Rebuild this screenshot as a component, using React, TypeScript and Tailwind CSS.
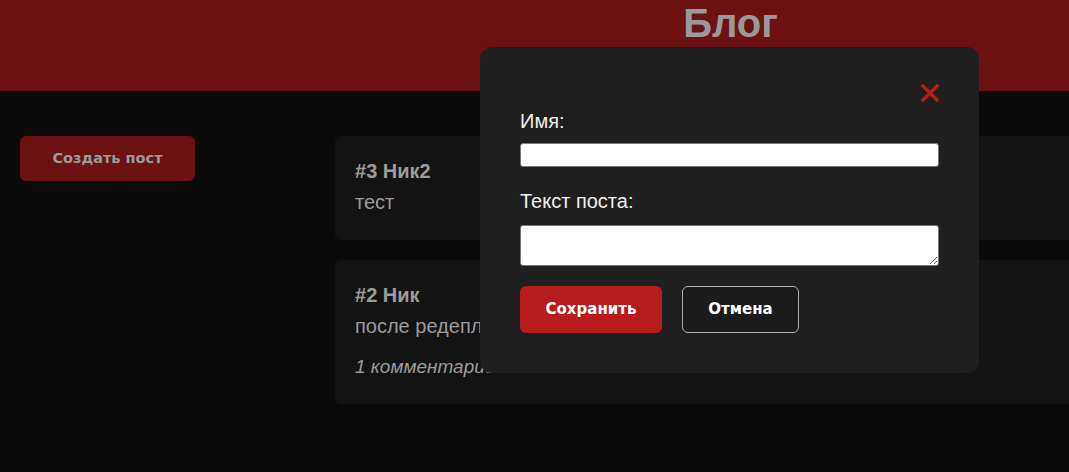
import { useState } from 'react'

const posts = [
    { id: 3, author: 'Ник2', text: 'тест', comments: 0 },
    { id: 2, author: 'Ник', text: 'после редеплоя', comments: 1 }
]

function CloseIcon() {
    return (
        <svg width="20" height="18" viewBox="0 0 20 18" className="block">
            <path d="M4 2 L18 16 M18 2 L4 16" stroke="#b71c1c" strokeWidth="3.4" strokeLinecap="square" />
        </svg>
    )
}

function PostCard({ post }: { post: (typeof posts)[number] }) {
    return (
        <div className="rounded-md bg-[#131313] px-5 pt-[24px] pb-[26px] text-[#9c9c9c]">
            <div className="text-[20px] leading-[23px] font-bold">
                #{post.id} {post.author}
            </div>
            <div className="mt-[8px] text-[20px] leading-[23px]">{post.text}</div>
            {post.comments > 0 && (
                <div className="mt-[17px] text-[19px] leading-[23px] italic">
                    {post.comments} комментарий
                </div>
            )}
        </div>
    )
}

function PostModal({ onClose }: { onClose: () => void }) {
    return (
        <div className="absolute left-[480px] top-[47px] w-[499px] rounded-xl bg-[#1f1f1f] px-10 pt-[37px] pb-10">
            <div className="flex justify-end">
                <button onClick={onClose} className="cursor-pointer">
                    <CloseIcon />
                </button>
            </div>
            <label className="mt-[8px] block text-[20px] leading-[23px] text-[#f0f0f0]">Имя:</label>
            <input className="mt-[10px] block h-[24px] w-full rounded-[3px] border border-[#767676] bg-white" />
            <label className="mt-[23px] block text-[20px] leading-[23px] text-[#f0f0f0]">Текст поста:</label>
            <textarea className="mt-[12px] block h-[41px] w-full rounded-[3px] border border-[#767676] bg-white" />
            <div className="mt-[20px] flex gap-5">
                <button className="h-[47px] w-[142px] rounded-md bg-[#b71c1c] text-[15px] font-bold text-white [font-family:'DejaVu_Sans',sans-serif]">
                    Сохранить
                </button>
                <button
                    onClick={onClose}
                    className="h-[47px] w-[117px] rounded-md border border-[#b0b0b0] bg-[#1b1b1b] text-[15px] font-bold text-white [font-family:'DejaVu_Sans',sans-serif]"
                >
                    Отмена
                </button>
            </div>
        </div>
    )
}

export default function App() {
    const [open, setOpen] = useState(true)

    return (
        <div className="relative h-[472px] w-[1069px] overflow-hidden bg-[#0b0b0b] font-['Liberation_Sans',Arial,sans-serif]">
            <header className="flex h-[91px] justify-center bg-[#6c1212] pl-[392px]">
                <h1 className="text-[40px] leading-[46px] font-bold text-[#9a9a9a]">Блог</h1>
            </header>

            <div className="flex pt-[45px]">
                <aside className="w-[335px] shrink-0 pl-5">
                    <button
                        onClick={() => setOpen(true)}
                        className="h-[45px] w-[175px] rounded-md bg-[#6c1212] text-[14.5px] font-bold text-[#9a9a9a] [font-family:'DejaVu_Sans',sans-serif]"
                    >
                        Создать пост
                    </button>
                </aside>
                <main className="flex w-[790px] shrink-0 flex-col gap-5">
                    {posts.map((p) => (
                        <PostCard key={p.id} post={p} />
                    ))}
                </main>
            </div>

            {open && <PostModal onClose={() => setOpen(false)} />}
        </div>
    )
}
